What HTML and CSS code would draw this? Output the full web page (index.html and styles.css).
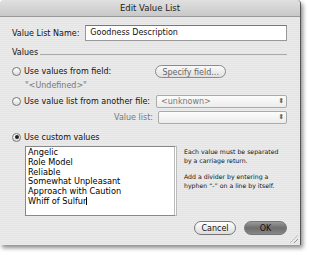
FILE: index.html
```html
<!DOCTYPE html>
<html>
<head>
<meta charset="utf-8">
<link rel="stylesheet" href="styles.css">
</head>
<body>
<div class="window">
  <div class="titlebar">Edit Value List</div>
  <div class="content">
    <div class="name-row">
      <span class="label">Value List Name:</span>
      <div class="textfield">Goodness Description</div>
    </div>
    <div class="group-head"><span>Values</span><span class="rule"></span></div>
    <div class="opt-row row1">
      <span class="radio"></span><span class="opt-label">Use values from field:</span>
      <span class="pill">Specify field...</span>
    </div>
    <div class="undef">"&lt;Undefined&gt;"</div>
    <div class="opt-row row2">
      <span class="radio"></span><span class="opt-label">Use value list from another file:</span>
      <div class="popup"><span>&lt;unknown&gt;</span><span class="arrows">⬍</span></div>
    </div>
    <div class="opt-row row3">
      <span class="sublabel">Value list:</span>
      <div class="popup"><span></span><span class="arrows">⬍</span></div>
    </div>
    <div class="opt-row row4">
      <span class="radio on"></span><span class="opt-label">Use custom values</span>
    </div>
    <div class="custom">
      <div class="textarea">
        <div>Angelic</div>
        <div>Role Model</div>
        <div>Reliable</div>
        <div>Somewhat Unpleasant</div>
        <div>Approach with Caution</div>
        <div>Whiff of Sulfur<span class="caret"></span></div>
      </div>
      <div class="help">
        <p>Each value must be separated<br>by a carriage return.</p>
        <p>Add a divider by entering a<br>hyphen “-” on a line by itself.</p>
      </div>
    </div>
    <div class="buttons">
      <span class="btn">Cancel</span>
      <span class="btn default">OK</span>
    </div>
  </div>
  <div class="grip"></div>
</div>
</body>
</html>
```
FILE: styles.css
```css
html, body { margin: 0; padding: 0; background: #fff; }
body { width: 309px; height: 255px; overflow: hidden; font-family: "DejaVu Sans", sans-serif; font-size: 8px; color: #111; }
.window {
  position: relative;
  width: 300px; height: 245px;
  background: repeating-linear-gradient(#ebebeb 0 1px, #e4e4e4 1px 2px);
  border-right: 1px solid #555;
  border-radius: 4px 4px 0 0;
  box-shadow: 2px 3px 4px rgba(0,0,0,0.45);
  display: flex; flex-direction: column;
}
.titlebar {
  height: 16px; line-height: 16px; text-align: center;
  background: linear-gradient(#e0e0e0, #c8c8c8);
  border-bottom: 1px solid #9a9a9a;
  border-radius: 4px 4px 0 0;
  font-size: 8.5px; color: #222;
}
.content { padding: 8px 13px 0 12px; display: flex; flex-direction: column; }
.name-row { display: flex; align-items: center; gap: 6px; }
.textfield {
  flex: 1; height: 14px; line-height: 14px; background: #fff;
  border: 1px solid #999; border-top-color: #777; padding-left: 4px;
}
.group-head { display: flex; align-items: flex-end; gap: 2px; margin-top: 4px; height: 12px; }
.rule { flex: 1; border-bottom: 1px solid #aaa; margin-bottom: 2px; }
.opt-row { display: flex; align-items: center; height: 14px; }
.row1 { margin-top: 7px; }
.radio {
  width: 9px; height: 9px; border-radius: 50%; border: 1px solid #777; box-sizing: border-box;
  background: linear-gradient(#fff, #ddd); margin-right: 3px; position: relative;
}
.radio.on::after { content: ""; position: absolute; left: 1.5px; top: 1.5px; width: 4px; height: 4px; border-radius: 50%; background: #222; }
.opt-label { white-space: nowrap; }
.pill {
  margin-left: 44px; width: 71px; height: 13px; line-height: 13px; border-radius: 7px;
  border: 1px solid #8a8a8a; background: linear-gradient(#fafafa, #e0e0e0); text-align: center; color: #666; box-sizing: border-box;
}
.undef { margin-left: 13px; color: #777; margin-top: 3px; }
.row2 { margin-top: 4px; }
.row2 .popup { margin-left: 6px; }
.popup {
  flex: 1; height: 13px; box-sizing: border-box; border: 1px solid #aaa; border-radius: 2px;
  background: linear-gradient(#fcfcfc, #ececec); display: flex; justify-content: space-between; align-items: center;
  padding: 0 2px 0 4px; color: #777;
}
.arrows { font-size: 7px; color: #666; }
.row3 { margin-top: 2px; }
.sublabel { margin-left: 96px; width: 45px; color: #777; text-align: right; }
.row3 .popup { margin-left: 5px; }
.row4 { margin-top: 6px; }
.custom { display: flex; margin-top: 2px; margin-left: 13px; gap: 7px; }
.textarea {
  width: 152px; height: 70px; box-sizing: border-box; background: #fff;
  border: 1px solid #888; border-right: 3px double #bbb; padding: 1px 2px; line-height: 9.8px; font-size: 8.2px; color: #000;
}
.caret { display: inline-block; width: 1px; height: 8px; background: #000; vertical-align: -1px; }
.help { font-size: 6.2px; line-height: 9px; white-space: nowrap; padding-top: 1px; }
.help p { margin: 0 0 7px 0; }
.buttons { display: flex; justify-content: flex-end; gap: 8px; margin-top: 5px; }
.btn {
  height: 14px; line-height: 14px; box-sizing: border-box; border-radius: 7px; border: 1px solid #777;
  background: linear-gradient(#fff, #dcdcdc); text-align: center; width: 42px;
}
.btn.default { background: linear-gradient(#9a9a9a, #6e6e6e 50%, #888); color: #111; width: 43px; }
.grip { position: absolute; right: 2px; bottom: 2px; width: 8px; height: 8px;
  background: repeating-linear-gradient(135deg, transparent 0 2px, #999 2px 3px); clip-path: polygon(100% 0, 100% 100%, 0 100%); }
```
